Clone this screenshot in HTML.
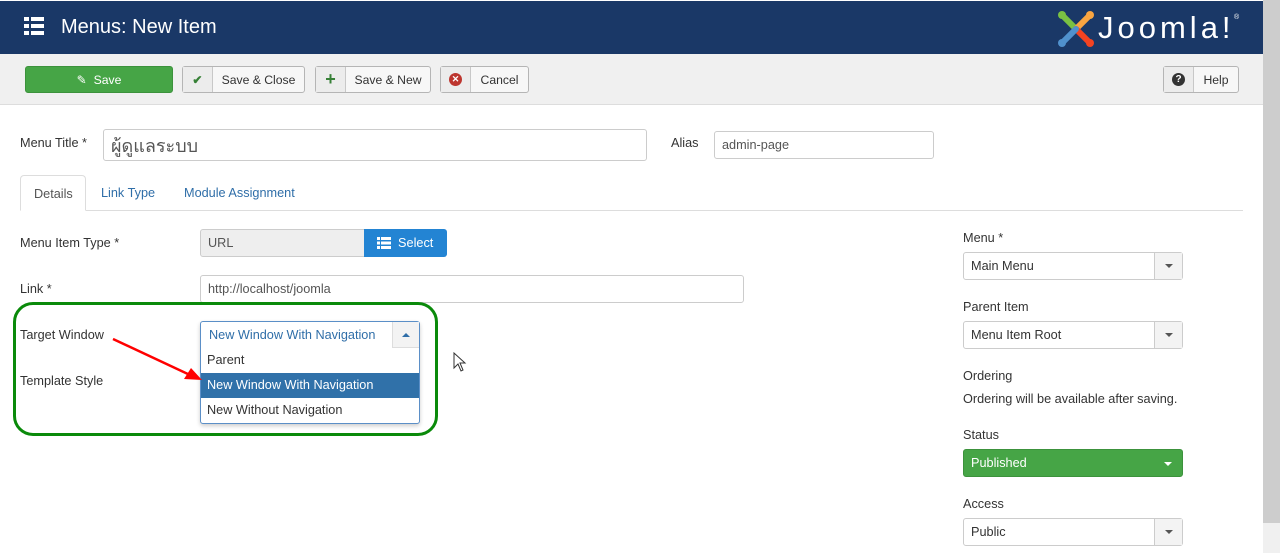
<!DOCTYPE html>
<html><head><meta charset="utf-8"><style>
*{box-sizing:border-box}
body{margin:0;width:1280px;height:553px;overflow:hidden;background:#fff;font-family:"Liberation Sans",Arial,sans-serif;font-size:12.7px;color:#333;position:relative}
.abs{position:absolute}
.hdr{left:0;top:1px;width:1263px;height:53px;background:#1a3867}
.sb{left:1263px;top:0;width:17px;height:523px;background:#cdcdcd}
.sb2{left:1263px;top:523px;width:17px;height:30px;background:#f0f0f0}
.tb{left:0;top:54px;width:1263px;height:51px;background:#f0f0f0;border-bottom:1px solid #ddd}
.btn{position:absolute;top:66px;height:27px;border:1px solid #b5b5b5;border-radius:3px;background:#f7f7f7;font-size:12.2px;display:flex;align-items:center;white-space:nowrap}
.btn .ic{flex:0 0 30px;width:30px;height:100%;border-right:1px solid #c8c8c8;background:#ececec;display:flex;align-items:center;justify-content:center}
.btn .tx{flex:1;text-align:center}
.inp{position:absolute;border:1px solid #ccc;border-radius:3px;background:#fff;display:flex;align-items:center;padding-left:7px;font-size:12.7px;color:#555}
.lbl{position:absolute;font-size:12.7px;color:#333}
.sel .car{position:absolute;right:0;top:0;bottom:0;width:28px;border-left:1px solid #ccc;background:#f3f3f3;display:flex;align-items:center;justify-content:center}
.tri{width:0;height:0;border-left:4px solid transparent;border-right:4px solid transparent;border-top:4px solid #555}
</style></head><body>
<div class="abs hdr"></div>
<div class="abs sb"></div><div class="abs sb2"></div>
<svg class="abs" style="left:24px;top:17px" width="20" height="18"><g fill="#fff"><rect x="0" y="0" width="5" height="4"/><rect x="7" y="0" width="13" height="4"/><rect x="0" y="7" width="5" height="4"/><rect x="7" y="7" width="13" height="4"/><rect x="0" y="14" width="5" height="4"/><rect x="7" y="14" width="13" height="4"/></g></svg>
<div class="abs" style="left:61px;top:16px;font-size:20px;color:#fff">Menus: New Item</div>
<svg class="abs" style="left:1056px;top:9px" width="40" height="38" viewBox="0 0 40 38"><g stroke-width="6" stroke-linecap="round" fill="none"><path d="M8 8 L20 20" stroke="#7ac143"/><path d="M32 8 L20 20" stroke="#f9a541"/><path d="M20 20 L32 32" stroke="#f44321"/><path d="M20 20 L8 32" stroke="#5091cd"/></g><circle cx="6" cy="6" r="4" fill="#7ac143"/><circle cx="34" cy="6" r="4" fill="#f9a541"/><circle cx="34" cy="34" r="4" fill="#f44321"/><circle cx="6" cy="34" r="4" fill="#5091cd"/></svg>
<div class="abs" style="left:1098px;top:10px;font-size:31px;color:#fff;letter-spacing:4px">Joomla!</div>
<div class="abs" style="left:1234px;top:14px;font-size:7px;color:#fff">®</div>
<div class="abs tb"></div>
<div class="btn" style="left:25px;width:148px;background:#46a546;border-color:#3c923c;color:#fff;justify-content:center">&#9998;&nbsp; Save</div>
<div class="btn" style="left:182px;width:123px"><div class="ic" style="color:#378137;font-weight:bold">✔</div><div class="tx">Save &amp; Close</div></div>
<div class="btn" style="left:315px;width:116px"><div class="ic" style="color:#378137;font-weight:bold;font-size:18px">+</div><div class="tx">Save &amp; New</div></div>
<div class="btn" style="left:440px;width:89px"><div class="ic"><span style="display:inline-block;width:13px;height:13px;border-radius:50%;background:#bd362f;color:#fff;font-size:9px;line-height:13px;text-align:center;font-weight:bold">✕</span></div><div class="tx">Cancel</div></div>
<div class="btn" style="left:1163px;width:76px"><div class="ic"><span style="display:inline-block;width:13px;height:13px;border-radius:50%;background:#333;color:#fff;font-size:10px;line-height:13px;text-align:center;font-weight:bold">?</span></div><div class="tx">Help</div></div>

<div class="lbl" style="left:20px;top:136px">Menu Title *</div>
<div class="inp" style="left:103px;top:129px;width:544px;height:32px;font-size:18px;color:#555;font-family:'Liberation Sans','Noto Sans CJK SC',sans-serif">ผู้ดูแลระบบ</div>
<div class="lbl" style="left:671px;top:136px">Alias</div>
<div class="inp" style="left:714px;top:131px;width:220px;height:28px">admin-page</div>

<div class="abs" style="left:20px;top:210px;width:1223px;border-top:1px solid #ddd"></div>
<div class="abs" style="left:20px;top:175px;width:66px;height:36px;border:1px solid #ddd;border-bottom:1px solid #fff;border-radius:4px 4px 0 0;background:#fff;padding:11px 0 0 13px;color:#555">Details</div>
<div class="lbl" style="left:101px;top:186px;color:#2f6ea8">Link Type</div>
<div class="lbl" style="left:184px;top:186px;color:#2f6ea8">Module Assignment</div>

<div class="lbl" style="left:20px;top:236px">Menu Item Type *</div>
<div class="inp" style="left:200px;top:229px;width:170px;height:28px;background:#eee;border-radius:3px 0 0 3px">URL</div>
<div class="abs" style="left:364px;top:229px;width:83px;height:28px;background:#2384d3;border-radius:0 3px 3px 0;color:#fff;display:flex;align-items:center;padding-left:13px"><svg width="14" height="12"><g fill="#fff"><rect x="0" y="0" width="3" height="3"/><rect x="4" y="0" width="10" height="3"/><rect x="0" y="4.5" width="3" height="3"/><rect x="4" y="4.5" width="10" height="3"/><rect x="0" y="9" width="3" height="3"/><rect x="4" y="9" width="10" height="3"/></g></svg>&nbsp; Select</div>

<div class="lbl" style="left:20px;top:282px">Link *</div>
<div class="inp" style="left:200px;top:275px;width:544px;height:28px">http://localhost/joomla</div>

<div class="abs" style="left:13px;top:302px;width:425px;height:134px;border:3px solid #0a8a0a;border-radius:20px"></div>
<div class="lbl" style="left:20px;top:328px">Target Window</div>
<div class="lbl" style="left:20px;top:374px">Template Style</div>
<div class="abs" style="left:200px;top:321px;width:220px;height:103px;border:1px solid #5b8fc7;border-radius:3px;background:#fff;box-shadow:0 2px 4px rgba(0,0,0,.2)"></div>
<div class="abs" style="left:209px;top:328px;color:#2f6ea8">New Window With Navigation</div>
<div class="abs" style="left:392px;top:322px;width:27px;height:26px;background:#f3f3f3;border-left:1px solid #ddd;border-bottom:1px solid #ddd;display:flex;align-items:center;justify-content:center"><div style="width:0;height:0;border-left:4px solid transparent;border-right:4px solid transparent;border-bottom:4px solid #2f6ea8"></div></div>
<div class="abs" style="left:207px;top:353px">Parent</div>
<div class="abs" style="left:201px;top:373px;width:218px;height:25px;background:#3071a9;color:#fff;padding:5px 0 0 6px">New Window With Navigation</div>
<div class="abs" style="left:207px;top:403px">New Without Navigation</div>
<svg class="abs" style="left:110px;top:335px" width="95" height="50"><line x1="3" y1="4" x2="80" y2="40" stroke="#f00" stroke-width="2.5"/><polygon points="92,45 74,44 81,33" fill="#f00"/></svg>
<svg class="abs" style="left:453px;top:352px" width="14" height="20"><path d="M1 1 L1 16 L5 12 L8 19 L10 18 L7 11 L12 11 Z" fill="#fff" stroke="#333"/></svg>

<div class="lbl" style="left:963px;top:231px">Menu *</div>
<div class="inp sel" style="left:963px;top:252px;width:220px;height:28px;color:#333">Main Menu<div class="car"><div class="tri"></div></div></div>
<div class="lbl" style="left:963px;top:300px">Parent Item</div>
<div class="inp sel" style="left:963px;top:321px;width:220px;height:28px;color:#333">Menu Item Root<div class="car"><div class="tri"></div></div></div>
<div class="lbl" style="left:963px;top:369px">Ordering</div>
<div class="lbl" style="left:963px;top:392px">Ordering will be available after saving.</div>
<div class="lbl" style="left:963px;top:428px">Status</div>
<div class="inp" style="left:963px;top:449px;width:220px;height:28px;background:#46a546;border-color:#3c923c;color:#fff">Published<div style="position:absolute;right:10px;top:12px;width:0;height:0;border-left:4px solid transparent;border-right:4px solid transparent;border-top:4px solid #fff"></div></div>
<div class="lbl" style="left:963px;top:497px">Access</div>
<div class="inp sel" style="left:963px;top:518px;width:220px;height:28px;color:#333">Public<div class="car"><div class="tri"></div></div></div>
</body></html>
